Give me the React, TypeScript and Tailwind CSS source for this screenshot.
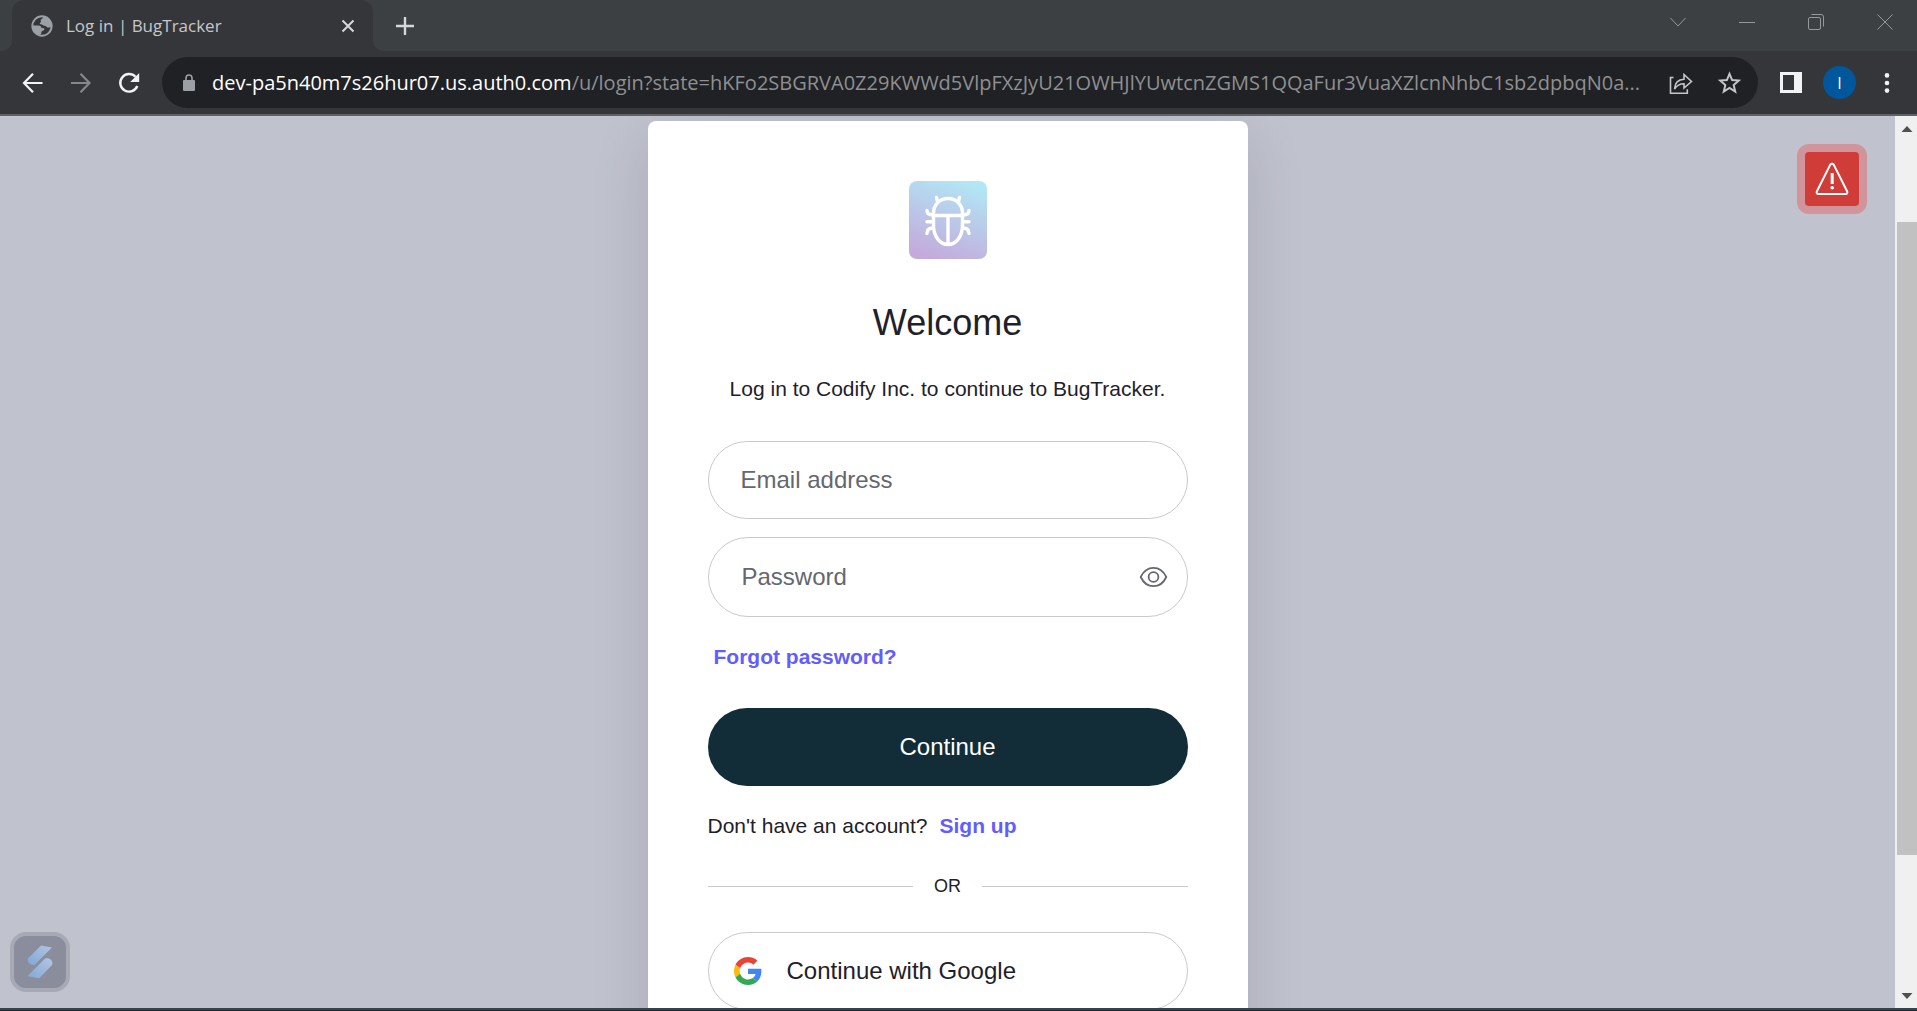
import { useState } from "react";

const iconButton = "flex items-center justify-center rounded-full";

function Globe() {
  return (
    <svg viewBox="0 0 24 24" className="size-6 shrink-0 text-[#9aa0a6]" aria-hidden="true">
      <circle cx="12" cy="12" r="9.7" fill="none" stroke="currentColor" strokeWidth="1.9" />
      <path
        fill="currentColor"
        d="M12.6 2.5c.5 1 .2 2-.9 2.6-.9.5-1.4 1.1-.9 2 .4.7.1 1.3-.6 1.7-.8.5-.5 1.4.5 1.5 1.7.1 2.4 1.4 3.7 1.5 1.9.1 2 1.6 3.6 1.7 1.6 0 2.7.2 3.6-.4C22.500 6.500 18 2 12.600 2.500zM2.600 11.500h6c1.800 0 2.900 1 2.900 2.500h1.700c1.400.1 1.500 1.900.4 2.400-1.300.4-2.200.7-2.200 2.100 0 1.200-.6 2-1.500 2.600C5.700 20.300 2.300 16.500 2.600 11.500z"
      />
    </svg>
  );
}

function TabStrip() {
  return (
    <header className="flex h-[51px] shrink-0 bg-[#3c4043]">
      <div className="flex w-3 bg-[#35363a]">
        <div className="flex-1 rounded-br-[10px] bg-[#3c4043]" />
      </div>
      <div className="flex w-[361px] items-center rounded-t-xl bg-[#35363a] pl-[18px] pr-[15px]">
        <Globe />
        <span className="ml-3 flex-1 font-['Open_Sans',sans-serif] text-[17px] leading-6 text-[#c6c7c9]">
          Log in | BugTracker
        </span>
        <button aria-label="Close tab" className={`${iconButton} size-5`}>
          <svg viewBox="0 0 20 20" className="size-5" stroke="#d5d7d9" strokeWidth="2" aria-hidden="true">
            <path d="M4.500 4.500l11 11M15.500 4.500l-11 11" />
          </svg>
        </button>
      </div>
      <div className="flex w-3 bg-[#35363a]">
        <div className="flex-1 rounded-bl-[10px] bg-[#3c4043]" />
      </div>
      <button aria-label="New tab" className="ml-[11px] flex w-[18px] items-center">
        <svg viewBox="0 0 18 18" className="size-[18px]" stroke="#d5d7d9" strokeWidth="2.4" aria-hidden="true">
          <path d="M9 0v18M0 9h18" />
        </svg>
      </button>
      <div className="ml-auto flex h-[43px] items-center gap-[53px] pr-6 text-[#96999b]">
        <button aria-label="Search tabs">
          <svg viewBox="0 0 16 16" className="size-4" fill="none" stroke="currentColor" aria-hidden="true">
            <path d="M.5 4L8 12l7.500-8" />
          </svg>
        </button>
        <button aria-label="Minimize">
          <svg viewBox="0 0 16 16" className="size-4" stroke="currentColor" aria-hidden="true">
            <path d="M0 8.500h16" />
          </svg>
        </button>
        <button aria-label="Restore">
          <svg viewBox="0 0 16 16" className="size-4" fill="none" stroke="currentColor" aria-hidden="true">
            <rect x=".5" y="3.500" width="12" height="12" rx="1.500" />
            <path d="M3.500.5h9.500a2.500 2.500 0 0 1 2.500 2.500v9.500" />
          </svg>
        </button>
        <button aria-label="Close window">
          <svg viewBox="0 0 16 16" className="size-4" stroke="currentColor" aria-hidden="true">
            <path d="M.5.5l15 15M15.500.5l-15 15" />
          </svg>
        </button>
      </div>
    </header>
  );
}

function Toolbar() {
  return (
    <nav className="flex h-[65px] shrink-0 items-center border-b-2 border-[#606164] bg-[#35363a] pl-[21px] pr-[27px]">
      <div className="flex gap-6">
        <button aria-label="Back" className={`${iconButton} size-6`}>
          <svg viewBox="0 0 24 24" className="size-6" fill="none" stroke="#f1f3f4" strokeWidth="2.2" aria-hidden="true">
            <path d="M21.500 12H3M12 2.800L3 12l9 9.200" />
          </svg>
        </button>
        <button aria-label="Forward" className={`${iconButton} size-6`}>
          <svg viewBox="0 0 24 24" className="size-6" fill="none" stroke="#85878a" strokeWidth="2.2" aria-hidden="true">
            <path d="M2 12H20.500M11.500 2.800l9 9.200-9 9.200" />
          </svg>
        </button>
        <button aria-label="Reload" className={`${iconButton} size-6`}>
          <svg viewBox="0 0 24 24" className="size-6" fill="none" aria-hidden="true">
            <path d="M20.300 15a8.800 8.800 0 1 1-1.800-9.200" stroke="#f1f3f4" strokeWidth="2.4" />
            <path d="M22.200 2v9h-9z" fill="#f1f3f4" />
          </svg>
        </button>
      </div>
      <div className="ml-[21px] flex h-[51px] min-w-0 flex-1 items-center rounded-full bg-[#202124] pl-5 pr-4">
        <svg viewBox="0 0 14 18" className="h-[18px] w-3.5 shrink-0" aria-hidden="true">
          <rect x="1" y="6" width="12" height="11" rx="1" fill="#9aa0a6" />
          <path d="M4 7V4a3 3 0 0 1 6 0v3" fill="none" stroke="#9aa0a6" strokeWidth="1.6" />
        </svg>
        <p className="ml-4 min-w-0 flex-1 whitespace-nowrap font-['Open_Sans',sans-serif] text-[20px] leading-7 text-[#8e9093]">
          <span className="text-white">dev-pa5n40m7s26hur07.us.auth0.com</span>
          /u/login?state=hKFo2SBGRVA0Z29KWWd5VlpFXzJyU21OWHJlYUwtcnZGMS1QQaFur3VuaXZlcnNhbC1sb2dpbqN0a...
        </p>
        <button aria-label="Share this page" className="ml-5 shrink-0">
          <svg viewBox="0 0 24 24" className="size-6" fill="none" stroke="#c4c6c8" strokeWidth="1.6" aria-hidden="true">
            <path d="M4.500 6.500H1.500V22.200h16.800v-4" />
            <path d="M5.500 18c.4-6 3.500-9.500 9.500-9.700V3.500L22.500 10.500 15 17v-4.300c-4.500 0-7.200 1.500-9.500 5.300z" />
          </svg>
        </button>
        <button aria-label="Bookmark this tab" className="ml-6 shrink-0">
          <svg viewBox="0 0 24 24" className="size-[25px]" fill="none" stroke="#c4c6c8" strokeWidth="1.9" aria-hidden="true">
            <path d="M12 3.700l2.500 6 6.400.5-4.900 4.200 1.500 6.300-5.500-3.400-5.500 3.400L8 14.400l-4.900-4.200 6.400-.5z" />
          </svg>
        </button>
      </div>
      <div className="ml-[22px] flex items-center">
        <button aria-label="Side panel">
          <svg viewBox="0 0 22 21" className="h-[21px] w-[22px]" aria-hidden="true">
            <path fill="#f1f3f4" fillRule="evenodd" d="M0 0h22v21H0zM3 3v15h11V3z" />
          </svg>
        </button>
        <button
          aria-label="Profile"
          className={`${iconButton} ml-[21px] size-[33px] bg-[#00579b] font-['Open_Sans',sans-serif] text-base text-white`}
        >
          I
        </button>
        <button aria-label="Menu" className="ml-7">
          <svg viewBox="0 0 6 20" className="h-5 w-1.5" fill="#f1f3f4" aria-hidden="true">
            <circle cx="3" cy="2.400" r="2.300" />
            <circle cx="3" cy="10" r="2.300" />
            <circle cx="3" cy="17.600" r="2.300" />
          </svg>
        </button>
      </div>
    </nav>
  );
}

function BugLogo() {
  return (
    <div className="flex size-[78px] items-center justify-center rounded-lg bg-linear-[200deg,#b2e6f4_8%,#bac8e8_50%,#c4aadc_92%]">
      <svg viewBox="0 0 78 78" className="size-full" fill="none" stroke="#fff" strokeWidth="3.4" strokeLinecap="round" role="img" aria-label="BugTracker">
        <path d="M24.500 32c0-8 6-14.500 14.500-14.500S53.500 24 53.500 32v12c0 11-6 19.500-14.500 19.500S24.500 55 24.500 44z" />
        <path d="M24.500 34.500h29M39 34.500v28" strokeLinecap="butt" />
        <path d="M27.500 16.500l1.200 4.500M50.500 16.500l-1.200 4.500" />
        <path d="M18 29.500c0 3 2 4.500 6 4.500M60 29.500c0 3-2 4.500-6 4.500M18 40.700h6M60 40.700h-6M18 52.500c0-3.500 2-5.500 6-5.500M60 52.500c0-3.500-2-5.500-6-5.500" />
      </svg>
    </div>
  );
}

function GoogleLogo() {
  return (
    <svg viewBox="0 0 48 48" className="mx-px size-7" aria-hidden="true">
      <path fill="#EA4335" d="M24 9.500c3.540 0 6.710 1.220 9.210 3.600l6.850-6.850C35.900 2.380 30.470 0 24 0 14.620 0 6.510 5.380 2.560 13.220l7.980 6.190C12.430 13.720 17.740 9.500 24 9.500z" />
      <path fill="#4285F4" d="M46.980 24.550c0-1.570-.15-3.090-.38-4.550H24v9.020h12.940c-.58 2.960-2.260 5.480-4.780 7.180l7.730 6c4.510-4.180 7.090-10.360 7.090-17.650z" />
      <path fill="#FBBC05" d="M10.530 28.590c-.48-1.450-.76-2.990-.76-4.590s.27-3.140.76-4.590l-7.980-6.190C.92 16.460 0 20.120 0 24c0 3.880.92 7.540 2.560 10.780l7.970-6.190z" />
      <path fill="#34A853" d="M24 48c6.480 0 11.930-2.130 15.890-5.810l-7.730-6c-2.150 1.450-4.920 2.300-8.160 2.300-6.260 0-11.570-4.220-13.470-9.910l-7.980 6.190C6.510 42.620 14.620 48 24 48z" />
    </svg>
  );
}

function LoginCard() {
  const [visible, setVisible] = useState(false);
  return (
    <main className="flex w-[600px] shrink-0 flex-col items-center rounded-lg bg-white px-15 py-15 font-['Liberation_Sans',Arial,sans-serif] text-[21px] leading-8 text-[#1e212a] shadow-[0_18px_60px_rgba(0,0,0,0.12)]">
      <BugLogo />
      <h1 className="mt-10 text-[36px] leading-12">Welcome</h1>
      <p className="mt-[26px] text-center">Log in to Codify Inc. to continue to BugTracker.</p>
      <form className="mt-9 flex w-full flex-col" onSubmit={(e) => e.preventDefault()}>
        <input
          type="email"
          aria-label="Email address"
          placeholder="Email address"
          className="h-[78px] w-full rounded-full border border-[#c9cace] px-8 text-[24px] placeholder:text-[#65676e]"
        />
        <div className="mt-[18px] flex h-20 items-center rounded-full border border-[#c9cace] pl-[33px] pr-[18px]">
          <input
            type={visible ? "text" : "password"}
            aria-label="Password"
            placeholder="Password"
            className="min-w-0 flex-1 text-[24px] outline-none placeholder:text-[#65676e]"
          />
          <button type="button" aria-label="Show password" onClick={() => setVisible(!visible)}>
            <svg viewBox="0 0 30 24" className="h-6 w-[30px]" fill="none" stroke="#65676e" strokeWidth="1.8" aria-hidden="true">
              <path d="M1.700 12C4.500 6 9 2.800 14.500 2.800S24.500 6 27.300 12C24.500 18 20 21.200 14.500 21.200S4.500 18 1.700 12z" strokeLinejoin="round" />
              <circle cx="14.500" cy="12" r="4.900" />
            </svg>
          </button>
        </div>
        <a href="#forgot" className="ml-1.5 mt-6 self-start font-bold text-[#635dff]">
          Forgot password?
        </a>
        <button type="submit" className="mt-[35px] h-[78px] rounded-full bg-[#122d37] text-[24px] text-white">
          Continue
        </button>
      </form>
      <p className="mt-6 self-start">
        Don't have an account?
        <a href="#signup" className="ml-3 font-bold text-[#635dff]">
          Sign up
        </a>
      </p>
      <div className="mt-7 flex w-full items-center gap-[21px] text-[18px]">
        <div className="h-px flex-1 bg-[#c9cace]" />
        OR
        <div className="h-px flex-1 bg-[#c9cace]" />
      </div>
      <button className="mt-[30px] flex h-[78px] w-full shrink-0 items-center gap-6 rounded-full border border-[#c9cace] pl-6 text-[24px]">
        <GoogleLogo />
        Continue with Google
      </button>
    </main>
  );
}

function Scrollbar() {
  return (
    <div className="flex w-[22px] shrink-0 flex-col items-end bg-[#f0f0f0]" aria-hidden="true">
      <svg viewBox="0 0 20 22" className="h-[22px] w-5" fill="#505050">
        <path d="M4.500 16L10 10l5.500 6z" />
      </svg>
      <div className="grow-[84]" />
      <div className="w-5 grow-[633] bg-[#c1c1c1]" />
      <div className="grow-[131]" />
      <svg viewBox="0 0 20 22" className="h-[22px] w-5" fill="#505050">
        <path d="M4.500 7L10 13l5.500-6z" />
      </svg>
    </div>
  );
}

export default function App() {
  return (
    <div className="flex h-screen flex-col overflow-hidden">
      <TabStrip />
      <Toolbar />
      <div className="flex min-h-0 flex-1">
        <div className="relative flex flex-1 items-start justify-center overflow-hidden bg-[#c0c2ce] pt-[5px]">
          <LoginCard />
          <button
            aria-label="Warnings"
            className="absolute right-7 top-7 flex size-[70px] items-center justify-center rounded-xl bg-[#d1949b]"
          >
            <span className="flex size-[54px] items-center justify-center rounded-[4px] bg-[#d03c38]">
              <svg viewBox="0 0 34 34" className="size-[34px]" fill="none" stroke="#fff" strokeWidth="2" aria-hidden="true">
                <path strokeLinejoin="round" d="M15.300 2.600a2 2 0 0 1 3.400 0L32.200 29.500a1.700 1.700 0 0 1-1.500 2.500H3.300a1.700 1.700 0 0 1-1.500-2.500z" />
                <path d="M17.200 11v11" strokeWidth="3" />
                <circle cx="17.200" cy="25.700" r="1.800" fill="#fff" stroke="none" />
              </svg>
            </span>
          </button>
          <button
            aria-label="Extension"
            className="absolute bottom-4 left-2.5 flex size-[60px] items-center justify-center rounded-2xl border-4 border-[#a7a9b7] bg-[#8a8d9c]"
          >
            <svg viewBox="0 0 26 34" className="h-[34px] w-[26px]" aria-hidden="true">
              <defs>
                <linearGradient id="ribbon" x1="0" y1="1" x2="1" y2="0">
                  <stop offset="0" stopColor="#82a7d8" />
                  <stop offset="1" stopColor="#b3c5e0" />
                </linearGradient>
              </defs>
              <path fill="url(#ribbon)" d="M14 .5L25 2.500 7.500 20C4 20.500 0 18 1 13.500z" />
              <path fill="url(#ribbon)" d="M18 13.500c5-1 8.500 2.500 7 6.500L12 33.500.5 31z" />
            </svg>
          </button>
        </div>
        <Scrollbar />
      </div>
      <div className="h-[3px] shrink-0 border-t-2 border-[#3c4149] bg-[#1f2a33]" />
    </div>
  );
}
